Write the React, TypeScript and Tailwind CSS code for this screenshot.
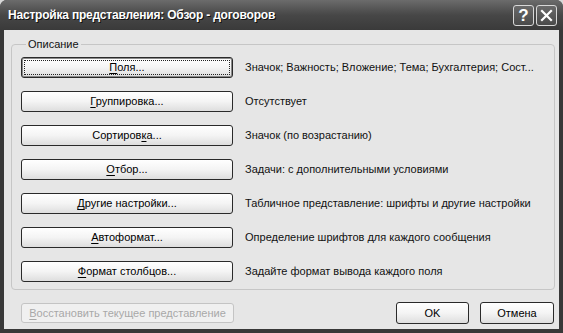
import React from 'react';

const font = { fontFamily: '"Liberation Sans", Arial, sans-serif' };

interface BtnProps {
  label: React.ReactNode;
  className?: string;
  focused?: boolean;
  disabled?: boolean;
}

function XpButton({ label, className = '', focused = false, disabled = false }: BtnProps) {
  return (
    <button
      className={`relative flex items-center justify-center rounded-[3px] text-[11px] leading-none ${
        disabled
          ? 'border border-[#c4c4c4] bg-[#f0f0f0] text-[#a8a8a8]'
          : 'border border-[#2a2a2a] bg-gradient-to-b from-[#ffffff] via-[#f4f4f4] to-[#dedede] text-black'
      } ${focused ? 'shadow-[inset_0_0_0_1px_#8a8a8a]' : ''} ${className}`}
    >
      {focused && <span className="absolute inset-[2px] border border-dotted border-[#222]" />}
      <span className="relative">{label}</span>
    </button>
  );
}

// underline the accelerator letter
function acc(text: string, i = 0) {
  return (
    <>
      {text.slice(0, i)}
      <span className="underline underline-offset-[2px]">{text[i]}</span>
      {text.slice(i + 1)}
    </>
  );
}

export default function App() {
  const rows = [
    { label: acc('Поля...'), desc: 'Значок; Важность; Вложение; Тема; Бухгалтерия; Сост...', focused: true },
    { label: acc('Группировка...'), desc: 'Отсутствует' },
    { label: acc('Сортировка...', 8), desc: 'Значок (по возрастанию)' },
    { label: acc('Отбор...'), desc: 'Задачи: с дополнительными условиями' },
    { label: acc('Другие настройки...'), desc: 'Табличное представление: шрифты и другие настройки' },
    { label: acc('Автоформат...'), desc: 'Определение шрифтов для каждого сообщения' },
    { label: acc('Формат столбцов...'), desc: 'Задайте формат вывода каждого поля' },
  ];

  return (
    <div className="w-[563px] h-[333px] bg-[#d8d8d8]" style={font}>
      <div className="w-full h-full flex flex-col rounded-t-[7px] bg-[#383838] overflow-hidden">
        {/* title bar */}
        <div className="h-[30px] shrink-0 flex items-center justify-between pl-[8px] pr-[6px] bg-gradient-to-b from-[#6c6c6c] via-[#474747] to-[#3a3a3a]">
          <span
            className="text-white text-[12px] font-bold tracking-[-0.2px]"
            style={{ textShadow: '1px 1px 0 #111' }}
          >
            Настройка представления: Обзор - договоров
          </span>
          <div className="flex gap-[2px] pt-[1px]">
            <div className="w-[21px] h-[21px] rounded-[3px] border border-[#d8d8d8] bg-gradient-to-b from-[#6a6a6a] to-[#4a4a4a] flex items-center justify-center text-white text-[17px] font-bold leading-none">
              ?
            </div>
            <div className="w-[21px] h-[21px] rounded-[3px] border border-[#d8d8d8] bg-gradient-to-b from-[#6a6a6a] to-[#4a4a4a] flex items-center justify-center">
              <svg width="13" height="13" viewBox="0 0 13 13">
                <path d="M2 2 L11 11 M11 2 L2 11" stroke="#fff" strokeWidth="2.2" strokeLinecap="square" />
              </svg>
            </div>
          </div>
        </div>

        {/* client area */}
        <div className="flex-1 mx-[4px] mb-[4px] bg-[#e6e6e6] flex flex-col pl-[7px] pr-[4px] pt-[8px]">
          <fieldset className="border border-[#c6c6c6] rounded-[4px] pl-[9px] pr-[8px] pt-[6px] pb-[7px]">
            <legend className="ml-[5px] px-[2px] text-[11px] leading-[13px] text-[#111]">Описание</legend>
            <div className="flex flex-col gap-[13px]">
              {rows.map((r, i) => (
                <div key={i} className="flex items-center">
                  <XpButton label={r.label} focused={r.focused} className="w-[212px] h-[21px]" />
                  <span className="ml-[12px] text-[11px] text-[#111] whitespace-nowrap">{r.desc}</span>
                </div>
              ))}
            </div>
          </fieldset>

          <div className="flex items-start mt-[12px] pl-[10px]">
            <XpButton label={acc('Восстановить текущее представление')} disabled className="w-[213px] h-[20px] mt-[1px]" />
            <div className="flex-1" />
            <XpButton label="OK" className="w-[73px] h-[22px]" />
            <XpButton label="Отмена" className="w-[74px] h-[22px] ml-[11px] mr-[1px]" />
          </div>
        </div>
      </div>
    </div>
  );
}
